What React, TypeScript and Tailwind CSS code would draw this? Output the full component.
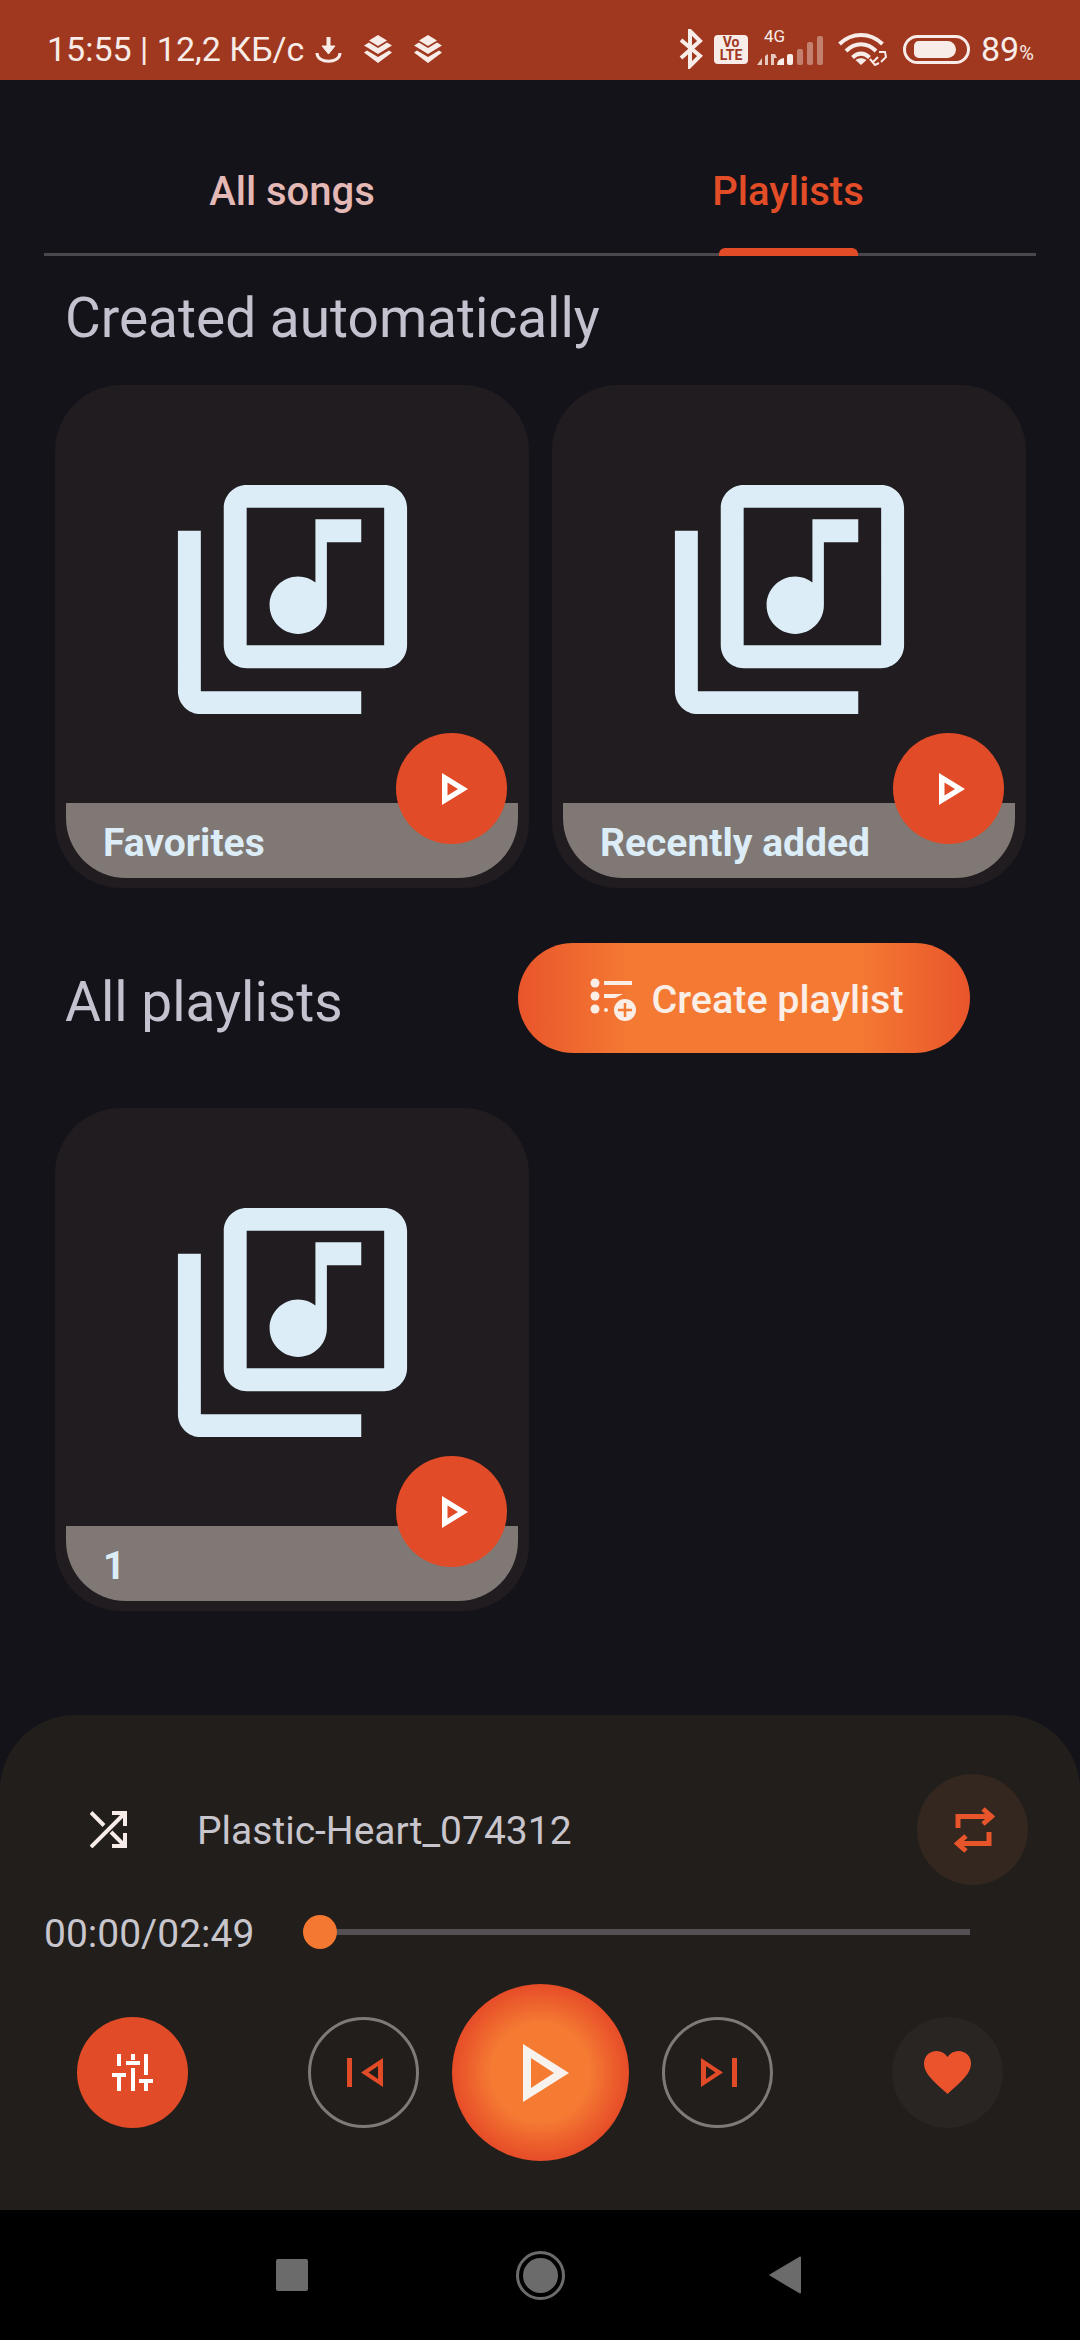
import React from "react";

const LibraryIcon = () => (
  <svg viewBox="0 0 24 24" width="275" height="275" fill="#dcedf8">
    <path d="M20 2H8c-1.1 0-2 .9-2 2v12c0 1.1.9 2 2 2h12c1.1 0 2-.9 2-2V4c0-1.1-.9-2-2-2zm0 14H8V4h12v12zm-7.5-1c1.38 0 2.5-1.12 2.5-2.5V7h3V5h-4v5.51c-.42-.32-.93-.51-1.5-.51-1.38 0-2.5 1.12-2.5 2.5s1.12 2.5 2.5 2.5zM4 6H2v14c0 1.1.9 2 2 2h14v-2H4V6z" />
  </svg>
);

const Card = ({ title }: { title: string }) => (
  <div className="relative flex h-[503px] w-[474px] flex-col items-center rounded-[66px] bg-[#201c1f] px-[11px] pb-[10px]">
    <div className="flex flex-1 items-start justify-center pt-[77px]">
      <LibraryIcon />
    </div>
    <div className="flex h-[75px] w-full items-center rounded-b-[60px] bg-[#7f7874] pl-[37px] pt-[6px] text-[39px] font-bold text-[#dcedf8]">
      {title}
    </div>
    <div className="absolute bottom-[44px] right-[22px] flex h-[111px] w-[111px] items-center justify-center rounded-full bg-[#e14b27]">
      <svg width="26" height="32" viewBox="0 0 26 32" className="ml-[6px]">
        <path fillRule="evenodd" fill="#fff" d="M0 0 L26 16 L0 32Z M5.5 9.5 V22.5 L16 16Z" />
      </svg>
    </div>
  </div>
);

const Layers = () => (
  <svg width="28" height="28" viewBox="0 0 28 28" fill="#f8ece8">
    <path d="M14 0 L23 5.5 L14 11 L5 5.5Z" />
    <path d="M5 7.5 L14 13 L23 7.5 L28 10.5 L14 19 L0 10.5Z" />
    <path d="M3 15.5 L14 22 L25 15.5 L28 17.5 L14 28 L0 17.5Z" />
  </svg>
);

const StatusBar = () => (
  <div className="flex h-[80px] shrink-0 items-center bg-[#a0381f] pl-[47px] pt-[18px] text-[#f8ece8]">
    <span className="w-[262px] whitespace-nowrap text-[34px] leading-[40px]">15:55 | 12,2 КБ/с</span>
    <svg width="27" height="27" viewBox="0 0 27 27" className="ml-[6px]" fill="none" stroke="#f8ece8">
      <path d="M13.5 1 V14" strokeWidth="4" />
      <path d="M7 10 H20 L13.5 18Z" fill="#f8ece8" strokeWidth="1" />
      <path d="M2 17 C2 28 25 28 25 17" strokeWidth="3" />
    </svg>
    <div className="ml-[22px]"><Layers /></div>
    <div className="ml-[22px]"><Layers /></div>
    <svg width="24" height="40" viewBox="0 0 24 40" className="ml-[237px]" fill="none" stroke="#f8ece8" strokeWidth="4">
      <path d="M2 11 L21 27 L11 37 V2 L21 12 L2 29" />
    </svg>
    <div className="ml-[11px] flex h-[29px] w-[34px] flex-col items-center justify-center rounded-[4px] bg-[#f8ece8] text-[14px] font-bold leading-[13px] text-[#a0381f]">
      <span>Vo</span>
      <span>LTE</span>
    </div>
    <div className="relative ml-[9px] h-[34px] w-[67px]">
      <span className="absolute left-[7px] top-[-5px] text-[17px] leading-[18px]">4G</span>
      <svg width="67" height="30" viewBox="0 0 67 30" className="absolute bottom-0 left-0" fill="#f8ece8">
        <path d="M0 29 L5 22 V29Z M8 29 V20 L11 18 V29Z M14 18 H18 L20 22 H17 V29 H14Z" opacity=".8" />
        <path d="M20 29 Q20 23 27 22 V29Z" />
        <rect x="30" y="18" width="6" height="11" rx="2" />
        <g opacity=".4">
          <rect x="40" y="13" width="6" height="16" rx="2" />
          <rect x="50" y="6" width="6" height="23" rx="2" />
          <rect x="60" y="0" width="6" height="29" rx="2" />
        </g>
      </svg>
    </div>
    <svg width="50" height="34" viewBox="0 0 50 34" className="ml-[14px]" fill="none" stroke="#f8ece8">
      <path d="M1.5 12 C14 0 32 0 44.5 12" strokeWidth="4" />
      <path d="M8 19 C17 10 29 10 38 19" strokeWidth="4" />
      <path d="M14.5 25.5 C20 20.5 26 20.5 31.500 25.500" strokeWidth="4" />
      <path d="M17.500 28 L23 33 L28.500 28 C25 25.500 21 25.500 17.500 28Z" fill="#f8ece8" strokeWidth="0" />
      <path d="M35 30 L40 25 M41 20 L47 20 L48 25 L43 30 M32 27 L37 33 L41 31" strokeWidth="2" />
    </svg>
    <div className="ml-[15px] flex h-[29px] w-[67px] items-center rounded-full border-[3px] border-[#f8ece8] px-[8px]">
      <div className="h-[17px] w-[42px] rounded-[5px] rounded-r-[9px] bg-[#f8ece8]" />
    </div>
    <span className="ml-[11px] text-[34px] leading-[40px]">89</span>
    <span className="text-[20px] leading-[20px] mt-[8px]">%</span>
  </div>
);

const Tabs = () => (
  <div className="flex h-[176px] shrink-0 items-end px-[44px]">
    <div className="flex w-full border-b-[3px] border-[#4a474d] text-[40px] font-medium">
      <div className="flex-1 pb-[36px] text-center leading-[50px] text-[#e3b8b5]">All songs</div>
      <div className="relative flex-1 pb-[36px] text-center leading-[50px] text-[#e24c27]">
        Playlists
        <div className="absolute bottom-[-3px] left-[179px] h-[8px] w-[139px] rounded-t-[6px] bg-[#e24c27]" />
      </div>
    </div>
  </div>
);

const Tri = () => (
  <svg width="31" height="29" viewBox="0 0 31 29" fill="#e14b27">
    <path fillRule="evenodd" d="M9 14.500 L31 0 V29Z M16.500 14.500 L26 21 V8Z" />
  </svg>
);

const Player = () => (
  <div className="mt-auto h-[495px] shrink-0 rounded-t-[75px] bg-[#211e1b]">
    <div className="flex items-center pl-[90px] pr-[52px] pt-[59px]">
      <svg width="37" height="37" viewBox="0 0 37 37" fill="none" stroke="#f8ece8" strokeWidth="4">
        <path d="M1 36 L35 2 M1 1.500 L14 14.500 M21 21 L34 34 M22 2 H35 V15 M22 35 H35 V22" />
      </svg>
      <span className="ml-[70px] whitespace-nowrap pt-[2px] text-[39px] leading-[46px] text-[#c8c5cc]">Plastic-Heart_074312</span>
      <div className="ml-auto flex h-[111px] w-[111px] items-center justify-center rounded-full bg-[#33271f]">
        <svg width="41" height="46" viewBox="0 0 41 46" className="ml-[3px]" fill="none" stroke="#e9552b" strokeWidth="5">
          <path d="M4 21 V9.500 H37 M29 2 L37.500 9.500 L29 17" />
          <path d="M35 25 V36.500 H4 M12 29 L3.500 36.500 L12 44" />
        </svg>
      </div>
    </div>
    <div className="mt-[28px] flex items-center pl-[44px]">
      <span className="w-[259px] whitespace-nowrap pt-[4px] text-[39px] leading-[34px] text-[#c8c5cc]">00:00/02:49</span>
      <div className="h-[34px] w-[34px] rounded-full bg-[#f47832]" />
      <div className="h-[6px] w-[633px] bg-[#545053]" />
    </div>
    <div className="mt-[33px] flex items-center pl-[77px]">
      <div className="flex h-[111px] w-[111px] items-center justify-center rounded-full bg-[#e14b27]">
        <svg width="41" height="37" viewBox="0 0 41 37" fill="#fff">
          <rect x="5" y="0" width="4" height="12" />
          <rect x="0" y="19" width="14" height="4" />
          <rect x="5" y="23" width="4" height="14" />
          <rect x="19" y="0" width="4" height="6" />
          <rect x="14" y="7" width="14" height="4" />
          <rect x="19" y="14" width="4" height="23" />
          <rect x="32" y="0" width="4" height="21" />
          <rect x="27" y="25" width="14" height="4" />
          <rect x="32" y="29" width="4" height="8" />
        </svg>
      </div>
      <div className="ml-[120px] flex h-[111px] w-[111px] items-center justify-center rounded-full border-[3px] border-[#7f7a76] pl-[2px]">
        <div className="h-[29px] w-[5px] bg-[#e14b27]" />
        <Tri />
      </div>
      <div className="ml-[33px] flex h-[177px] w-[177px] items-center justify-center rounded-full bg-[radial-gradient(closest-side,#f57b33_55%,#e64c28_100%)]">
        <svg width="46" height="58" viewBox="0 0 46 58" className="ml-[10px]">
          <path fillRule="evenodd" fill="#f8f2ee" d="M0 0 L46 29 L0 58Z M8 14 V44 L31 29Z" />
        </svg>
      </div>
      <div className="ml-[33px] flex h-[111px] w-[111px] items-center justify-center rounded-full border-[3px] border-[#7f7a76] pl-[2px]">
        <div className="-scale-x-100"><Tri /></div>
        <div className="h-[29px] w-[5px] bg-[#e14b27]" />
      </div>
      <div className="ml-[119px] flex h-[111px] w-[111px] items-center justify-center rounded-full bg-[#282522]">
        <svg width="47" height="43" viewBox="0 0 47 43" fill="#ea532b">
          <path d="M23.500 43 C8 29 0 22 0 12.500 C0 5 5.500 0 12.500 0 C17 0 21 2 23.500 6 C26 2 30 0 34.500 0 C41.500 0 47 5 47 12.500 C47 22 39 29 23.500 43Z" />
        </svg>
      </div>
    </div>
  </div>
);

const NavBar = () => (
  <div className="flex h-[130px] shrink-0 items-center bg-black pl-[276px]">
    <div className="h-[32px] w-[32px] rounded-[2px] bg-[#6b6b6b]" />
    <div className="ml-[208px] flex h-[49px] w-[49px] items-center justify-center rounded-full border-[3px] border-[#6b6b6b]">
      <div className="h-[35px] w-[35px] rounded-full bg-[#6b6b6b]" />
    </div>
    <svg width="32" height="38" viewBox="0 0 32 38" className="ml-[204px]" fill="#6b6b6b" stroke="#6b6b6b" strokeWidth="2" strokeLinejoin="round">
      <path d="M1.500 19 L31 1.500 V36.500Z" />
    </svg>
  </div>
);

export default function App() {
  return (
    <div className="flex h-[2340px] w-[1080px] flex-col overflow-hidden bg-[#15131a] font-['Roboto',sans-serif]">
      <StatusBar />
      <Tabs />
      <div className="mt-[32px] pl-[65px] text-[55px] leading-[60px] text-[#c5c2d0]">Created automatically</div>
      <div className="mt-[37px] grid grid-cols-[474px_474px] gap-x-[23px] pl-[55px]">
        <Card title="Favorites" />
        <Card title="Recently added" />
      </div>
      <div className="mt-[55px] flex h-[110px] items-center pl-[65px]">
        <span className="w-[453px] pt-[8px] text-[55px] leading-[60px] text-[#c5c2d0]">All playlists</span>
        <div className="flex h-[110px] w-[452px] items-center justify-center gap-[15px] rounded-full bg-[linear-gradient(90deg,#e9552b,#f47a33_25%,#f47a33_75%,#e9552b)] pl-[6px]">
          <svg width="46" height="43" viewBox="0 0 46 43" fill="#fbeee6" className="mt-[2px]">
            <circle cx="5" cy="5" r="4.500" />
            <circle cx="5" cy="18" r="4.500" />
            <circle cx="5" cy="31" r="4.500" />
            <rect x="14" y="3" width="28" height="4" />
            <path d="M14 16 H33 L25 20 H14Z" />
            <circle cx="16" cy="32" r="2" />
            <circle cx="35" cy="32" r="11" />
            <path d="M35 25 V39 M28 32 H42" stroke="#f47a33" strokeWidth="2.500" />
          </svg>
          <span className="pt-[4px] text-[39.5px] font-medium text-[#fbeee6]">Create playlist</span>
        </div>
      </div>
      <div className="mt-[55px] pl-[55px]">
        <Card title="1" />
      </div>
      <Player />
      <NavBar />
    </div>
  );
}
